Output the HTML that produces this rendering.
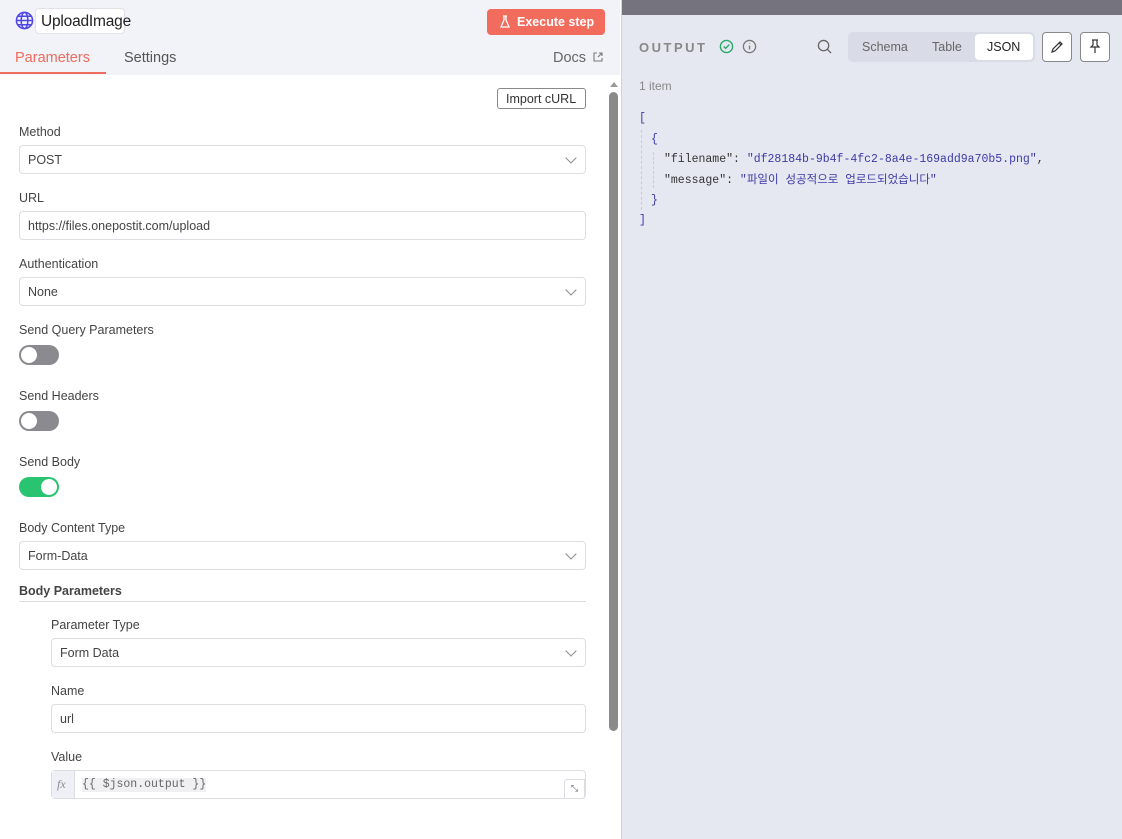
<!DOCTYPE html>
<html><head><meta charset="utf-8"><style>
*{box-sizing:border-box;margin:0;padding:0}
body{width:1122px;height:839px;overflow:hidden;font-family:"Liberation Sans","Noto Sans CJK KR",sans-serif;background:#fff;position:relative;color:#555}
.left{position:absolute;left:0;top:0;width:620px;height:839px;background:#fff}
.hdr{position:absolute;left:0;top:0;width:620px;height:75px;background:#f2f3f8}
.abs{position:absolute}
.lbl{position:absolute;font-size:12.5px;color:#444}
.inp{position:absolute;height:29px;border:1px solid #dcdde3;border-radius:4px;background:#fff;font-size:12.5px;color:#444;padding:7px 8px}
.chev{position:absolute;right:10px;top:8px;width:8px;height:8px;border-right:1.3px solid #888;border-bottom:1.3px solid #888;transform:rotate(45deg)}
.tog{position:absolute;width:40px;height:20px;border-radius:10px;background:#8a8a8f}
.tog::after{content:"";position:absolute;left:2px;top:2px;width:16px;height:16px;border-radius:50%;background:#fff}
.tog.on{background:#29c46f}.tog.on::after{left:22px}
.right{position:absolute;left:621px;top:0;width:501px;height:839px;background:#e6e8f1;border-left:1px solid #d0d2dc}
.mono{font-family:"Liberation Mono","Noto Sans CJK KR",monospace;font-size:11.5px;line-height:14px;white-space:nowrap}
</style></head><body>
<div class="left">
 <div class="hdr"></div>
 <svg class="abs" style="left:15px;top:11px" width="19" height="19" viewBox="0 0 20 20" fill="none" stroke="#4f46e5" stroke-width="1.6"><circle cx="10" cy="10" r="8.5"/><ellipse cx="10" cy="10" rx="3.5" ry="8.5"/><path d="M1.5 10h17M3 5.5h14M3 14.5h14"/></svg>
 <div class="abs" style="left:35px;top:8px;width:90px;height:26px;background:#fff;border:1px solid #e2e3e8;border-radius:4px;font-size:15.5px;color:#222;padding:4px 0 0 5px;white-space:nowrap;letter-spacing:-0.2px">UploadImage</div>
 <div class="abs" style="left:487px;top:9px;width:118px;height:26px;background:#f26c5e;border-radius:4px;color:#fff;font-size:12.5px;font-weight:bold;padding:6px 0 0 30px">Execute step</div>
 <svg class="abs" style="left:500px;top:15px" width="10" height="13" viewBox="0 0 10 13" fill="none" stroke="#fff" stroke-width="1.3"><path d="M3 1h4M4 1v4L1 12h8L6 5V1"/></svg>
 <div class="abs" style="left:15px;top:50px;font-size:14.5px;color:#ef6b5c">Parameters</div>
 <div class="abs" style="left:0;top:72px;width:106px;height:2px;background:#ef6b5c"></div>
 <div class="abs" style="left:124px;top:50px;font-size:14.5px;color:#555">Settings</div>
 <div class="abs" style="left:553px;top:50px;font-size:14.5px;color:#666">Docs</div>
 <svg class="abs" style="left:593px;top:52px" width="10" height="10" viewBox="0 0 10 10" fill="none" stroke="#777" stroke-width="1.1"><path d="M4 1H1v8h8V6M6 1h3v3M9 1L5 5"/></svg>
 <div class="abs" style="left:497px;top:88px;width:89px;height:21px;border:1px solid #888;border-radius:3px;font-size:12.5px;color:#333;padding:3px 0 0 8px">Import cURL</div>
 <div class="abs" style="left:610px;top:82px;width:0;height:0;border-left:4px solid transparent;border-right:4px solid transparent;border-bottom:5px solid #999"></div>
 <div class="abs" style="left:609px;top:92px;width:9px;height:639px;background:#8a8a8a;border-radius:5px"></div>

 <div class="lbl" style="left:19px;top:125px">Method</div>
 <div class="inp" style="left:19px;top:145px;width:567px">POST<div class="chev"></div></div>
 <div class="lbl" style="left:19px;top:191px">URL</div>
 <div class="inp" style="left:19px;top:211px;width:567px">https://files.onepostit.com/upload</div>
 <div class="lbl" style="left:19px;top:257px">Authentication</div>
 <div class="inp" style="left:19px;top:277px;width:567px">None<div class="chev"></div></div>
 <div class="lbl" style="left:19px;top:323px">Send Query Parameters</div>
 <div class="tog" style="left:19px;top:345px"></div>
 <div class="lbl" style="left:19px;top:389px">Send Headers</div>
 <div class="tog" style="left:19px;top:411px"></div>
 <div class="lbl" style="left:19px;top:455px">Send Body</div>
 <div class="tog on" style="left:19px;top:477px"></div>
 <div class="lbl" style="left:19px;top:521px">Body Content Type</div>
 <div class="inp" style="left:19px;top:541px;width:567px">Form-Data<div class="chev"></div></div>
 <div class="lbl" style="left:19px;top:584px;font-weight:bold;color:#444">Body Parameters</div>
 <div class="abs" style="left:19px;top:601px;width:567px;height:1px;background:#dcdde3"></div>
 <div class="lbl" style="left:51px;top:618px">Parameter Type</div>
 <div class="inp" style="left:51px;top:638px;width:535px">Form Data<div class="chev"></div></div>
 <div class="lbl" style="left:51px;top:684px">Name</div>
 <div class="inp" style="left:51px;top:704px;width:535px">url</div>
 <div class="lbl" style="left:51px;top:750px">Value</div>
 <div class="inp" style="left:51px;top:770px;width:535px;padding:0">
  <div class="abs" style="left:0;top:0;width:23px;height:27px;background:#eef0f5;border-right:1px solid #dcdde3;font-family:'Liberation Serif',serif;font-style:italic;color:#888;font-size:12px;padding:6px 0 0 5px">fx</div>
  <div class="abs mono" style="left:30px;top:7px;color:#666;background:#f0f0f2">{{ $json.output }}</div>
  <div class="abs" style="right:0;top:8px;width:21px;height:20px;border:1px solid #dcdde3;border-radius:3px 0 3px 0;font-size:9px;color:#666;text-align:center;padding-top:3px">⤡</div>
 </div>
</div>
<div class="right">
 <div class="abs" style="left:0;top:0;width:501px;height:15px;background:#75747e"></div>
 <div class="abs" style="left:17px;top:40px;font-size:13px;font-weight:bold;letter-spacing:2.5px;color:#888">OUTPUT</div>
 <svg class="abs" style="left:97px;top:39px" width="15" height="15" viewBox="0 0 16 16" fill="none" stroke="#2aa86b" stroke-width="1.5"><circle cx="8" cy="8" r="6.5"/><path d="M5 8l2 2 4-4"/></svg>
 <svg class="abs" style="left:120px;top:39px" width="15" height="15" viewBox="0 0 16 16" fill="none" stroke="#777" stroke-width="1.4"><circle cx="8" cy="8" r="6.5"/><path d="M8 7v4M8 4.5v.5"/></svg>
 <svg class="abs" style="left:195px;top:39px" width="15" height="15" viewBox="0 0 16 16" fill="none" stroke="#666" stroke-width="1.4"><circle cx="7" cy="7" r="5.5"/><path d="M11 11l4 4"/></svg>
 <div class="abs" style="left:226px;top:32px;width:187px;height:30px;background:#d9dce6;border-radius:5px"></div>
 <div class="abs" style="left:240px;top:40px;font-size:12.5px;color:#666">Schema</div>
 <div class="abs" style="left:310px;top:40px;font-size:12.5px;color:#666">Table</div>
 <div class="abs" style="left:353px;top:34px;width:58px;height:26px;background:#fff;border-radius:4px;font-size:12.5px;color:#222;padding:6px 0 0 12px">JSON</div>
 <div class="abs" style="left:420px;top:32px;width:30px;height:30px;border:1px solid #888;border-radius:4px;background:#fff"></div>
 <svg class="abs" style="left:428px;top:40px" width="14" height="14" viewBox="0 0 14 14" fill="none" stroke="#333" stroke-width="1.2"><path d="M2 12l1-3 7-7 2 2-7 7zM9 3l2 2"/></svg>
 <div class="abs" style="left:458px;top:32px;width:30px;height:30px;border:1px solid #888;border-radius:4px;background:#fff"></div>
 <svg class="abs" style="left:466px;top:39px" width="14" height="15" viewBox="0 0 14 15" fill="none" stroke="#333" stroke-width="1.2"><path d="M4 1h6M5 1v5L3 8h8L9 6V1M7 8v6"/></svg>
 <div class="abs" style="left:17px;top:79px;font-size:12px;color:#888">1 item</div>
 <div class="abs mono" style="left:17px;top:112px;color:#3d3aa8">[</div>
 <div class="abs" style="left:19px;top:130px;height:80px;border-left:1px dashed #ccc"></div>
 <div class="abs mono" style="left:29px;top:133px;color:#3d3aa8">{</div>
 <div class="abs" style="left:31px;top:152px;height:36px;border-left:1px dashed #ccc"></div>
 <div class="abs mono" style="left:42px;top:153px;color:#333">"filename": <span style="color:#3d3aa8">"df28184b-9b4f-4fc2-8a4e-169add9a70b5.png"</span>,</div>
 <div class="abs mono" style="left:42px;top:174px;color:#333">"message": <span style="color:#3d3aa8">"파일이 성공적으로 업로드되었습니다"</span></div>
 <div class="abs mono" style="left:29px;top:194px;color:#3d3aa8">}</div>
 <div class="abs mono" style="left:17px;top:214px;color:#3d3aa8">]</div>
</div>
</body></html>
